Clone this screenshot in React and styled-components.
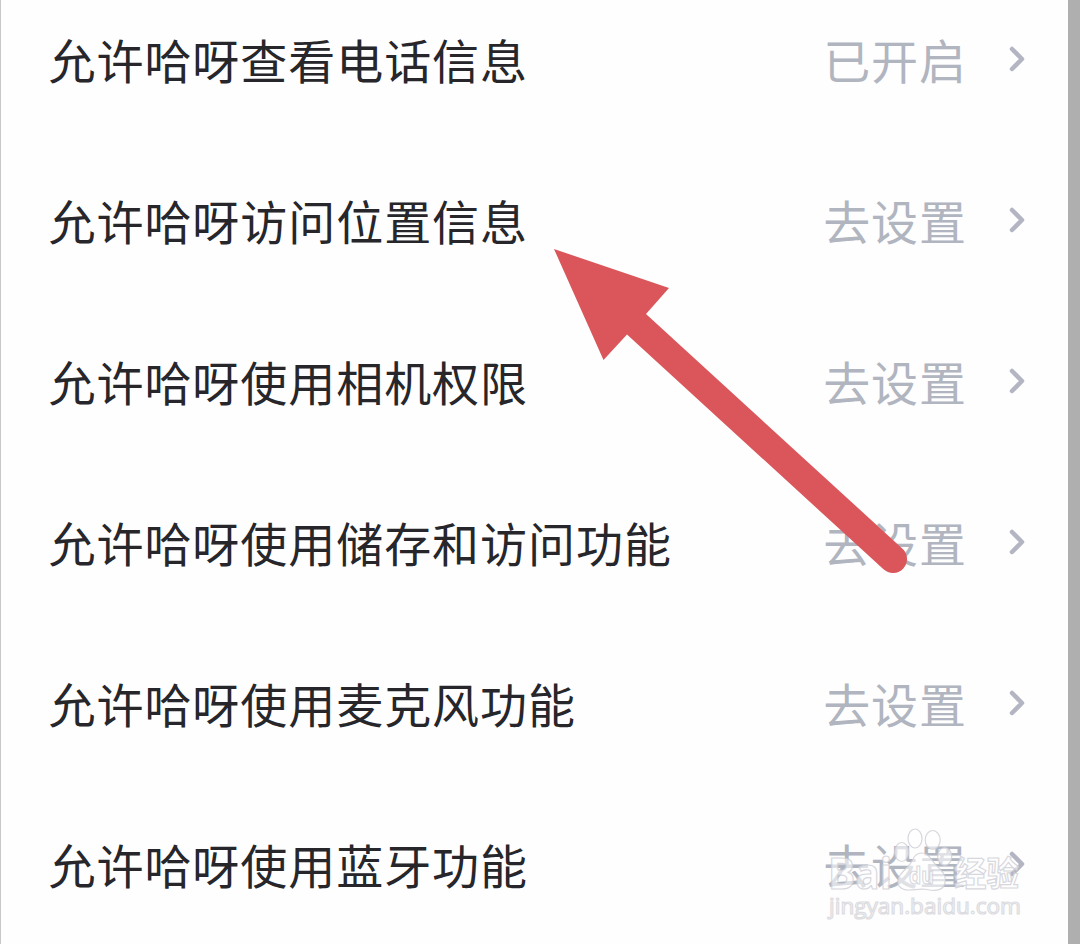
import React from "react"
import styled, { createGlobalStyle } from "styled-components";

const permissions = [
    { label: '允许哈呀查看电话信息', status: '已开启' },
    { label: '允许哈呀访问位置信息', status: '去设置' },
    { label: '允许哈呀使用相机权限', status: '去设置' },
    { label: '允许哈呀使用储存和访问功能', status: '去设置' },
    { label: '允许哈呀使用麦克风功能', status: '去设置' },
    { label: '允许哈呀使用蓝牙功能', status: '去设置' },
];

const App = () => {
    return (
        <Container>
            <GlobalStyle />
            <List>
                {permissions.map(({ label, status }) => (
                    <Row key={label}>
                        <Label>{label}</Label>
                        <Status>{status}</Status>
                        <Chevron viewBox="0 0 20 30">
                            <path d="M5 5L15 15L5 25" />
                        </Chevron>
                    </Row>
                ))}
            </List>
            <Arrow viewBox="0 0 356 326">
                <path d="M0 0L115 39L92 65L348.5 299.7A14 14 0 0 1 329.5 320.3L73 85.5L49.5 111Z" />
            </Arrow>
            <Watermark viewBox="0 0 210 100">
                <text x="9" y="63.5" fontSize="43" fontWeight="700" textLength="64" lengthAdjust="spacingAndGlyphs">Bai</text>
                <ellipse cx="82.7" cy="27" rx="7" ry="9.5" />
                <ellipse cx="96" cy="13.5" rx="7" ry="9.5" />
                <ellipse cx="113.7" cy="15" rx="7.5" ry="9.5" />
                <ellipse cx="125.7" cy="31.5" rx="7" ry="9" />
                <path d="M102.7 28C109 28 112 34 116 39C122 45 128 50 126 58C124 67 115 66 108 64.5C101 63.5 96 65 90 65C80 65 77 59 80 52C83 46 90 42 93 36C95 31 98 28 102.7 28Z" />
                <text x="90" y="58.5" fontSize="23" fontWeight="700" textLength="25" lengthAdjust="spacingAndGlyphs">du</text>
                <text x="135" y="61" fontSize="34" fontWeight="700" textLength="65" lengthAdjust="spacingAndGlyphs">经验</text>
                <Url x="10" y="89" fontSize="22" textLength="192" lengthAdjust="spacingAndGlyphs">jingyan.baidu.com</Url>
            </Watermark>
        </Container>
    );
}

const GlobalStyle = createGlobalStyle`
    body {
        margin: 0;
        overflow: hidden;
    }
`

const Container = styled.div`
    position: relative;
    box-sizing: border-box;
    width: 1080px;
    height: 944px;
    overflow: hidden;

    background: #FEFEFE;
    border-left: 1px solid #C8C8C8;
    border-right: 12px solid #AFAFAF;

    font-family: "Noto Sans CJK SC", sans-serif;
`

const List = styled.div`
    display: flex;
    flex-direction: column;
    margin-top: -22px;
`

const Row = styled.div`
    display: flex;
    align-items: center;
    box-sizing: border-box;
    height: 161px;
    padding: 0 41px 0 47.5px;
`

const Label = styled.div`
    flex: 1;
    font-size: 47px;
    letter-spacing: 0.95px;
    line-height: 70px;
    color: #26262B;
`

const Status = styled.div`
    font-size: 47px;
    letter-spacing: 0.95px;
    line-height: 70px;
    color: #B0B5C0;
`

const Chevron = styled.svg`
    width: 20px;
    height: 30px;
    margin: 1px 0 0 40px;
    fill: none;
    stroke: #B3B5C3;
    stroke-width: 4.5;
    stroke-linecap: round;
    stroke-linejoin: round;
`

const Arrow = styled.svg`
    /* 指向位置信息的箭头 */
    position: absolute;
    left: 553px;
    top: 249px;
    width: 356px;
    height: 326px;
    fill: #DB565B;
`

const Watermark = styled.svg`
    /* 水印 */
    position: absolute;
    left: 818px;
    top: 825px;
    width: 210px;
    height: 100px;
    fill: rgba(255, 255, 255, 0.6);
    stroke: rgba(205, 205, 212, 0.8);
    stroke-width: 1.2;
    font-family: "Open Sans", "Noto Sans CJK SC", sans-serif;
`

const Url = styled.text`
    fill: #FEFEFE;
    stroke: #DCDCE0;
`

export default App
